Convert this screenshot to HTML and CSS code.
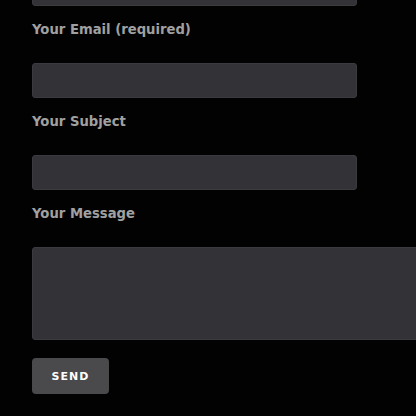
FILE: index.html
```html
<!DOCTYPE html>
<html>
<head>
<meta charset="utf-8">
<link rel="stylesheet" href="styles.css">
</head>
<body>
<form class="contact">
  <input class="field field-first" type="text">
  <label class="label">Your Email (required)</label>
  <input class="field" type="text">
  <label class="label">Your Subject</label>
  <input class="field" type="text">
  <label class="label">Your Message</label>
  <textarea class="field message"></textarea>
  <button class="send" type="button">Send</button>
</form>
</body>
</html>
```
FILE: styles.css
```css
html, body {
  margin: 0;
  padding: 0;
  background: #020202;
  overflow: hidden;
}
.contact {
  display: flex;
  flex-direction: column;
  align-items: flex-start;
  padding-left: 32px;
  font-family: "DejaVu Sans", Verdana, sans-serif;
}
.field {
  box-sizing: border-box;
  display: block;
  width: 325px;
  height: 35px;
  margin: 0 0 15px 0;
  padding: 0;
  background: #333236;
  border: 1px solid #3b3a3e;
  border-radius: 3px;
  outline: none;
}
.field-first {
  margin-top: -29px;
}
.label {
  display: block;
  height: 16px;
  padding-top: 1px;
  line-height: 16px;
  font-size: 13.2px;
  font-weight: bold;
  color: #a0a0a0;
  margin-bottom: 25px;
}
.message {
  width: 420px;
  height: 93px;
  margin-bottom: 18px;
  resize: none;
}
.send {
  box-sizing: border-box;
  width: 77px;
  height: 36px;
  padding: 1px 0 0 0;
  border: none;
  border-radius: 4px;
  background: #4a494c;
  color: #ffffff;
  font-family: "DejaVu Sans", Verdana, sans-serif;
  font-size: 11px;
  font-weight: bold;
  letter-spacing: 1px;
  text-transform: uppercase;
}
```
